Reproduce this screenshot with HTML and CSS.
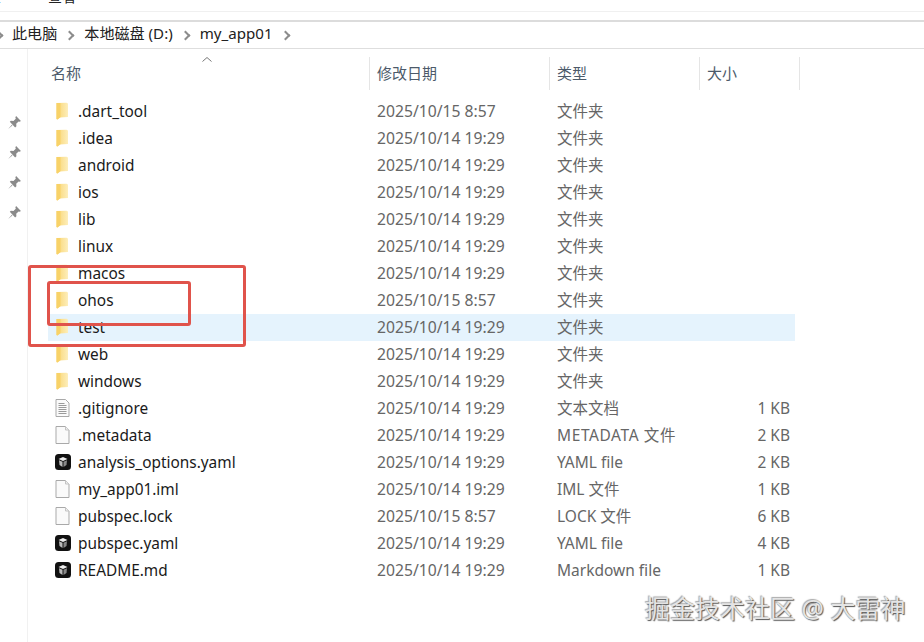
FILE: index.html
```html
<!DOCTYPE html>
<html lang="zh">
<head>
<meta charset="utf-8">
<title>my_app01</title>
<link rel="stylesheet" href="styles.css">
</head>
<body>
<svg class="defs" width="0" height="0" aria-hidden="true">
  <defs>
    <linearGradient id="fg" x1="0" y1="0" x2="1" y2="0">
      <stop offset="0" stop-color="#f9d677"/>
      <stop offset=".45" stop-color="#fbe091"/>
      <stop offset="1" stop-color="#fdeebb"/>
    </linearGradient>
  </defs>
  <symbol id="folder" viewBox="0 0 14 18">
    <path d="M1 1 L11 .8 L12.5 1.6 V15 L4 15.4 L2 17.4 L1 17 Z" fill="url(#fg)"/>
    <path d="M1 1 L5 .9 V15.2 L2 17.4 L1 17 Z" fill="#f8d268"/>
  </symbol>
  <symbol id="doc" viewBox="0 0 14 18">
    <path d="M.5 .5 H10 L13.5 4 V17.5 H.5 Z" fill="#fafafa" stroke="#a9a9a9"/>
    <path d="M10 .5 V4 H13.5" fill="#eee" stroke="#c4c4c4"/>
  </symbol>
  <symbol id="txt" viewBox="0 0 14 18">
    <path d="M.5 .5 H10 L13.5 4 V17.5 H.5 Z" fill="#fafafa" stroke="#a9a9a9"/>
    <path d="M3 4.5 H9 M3 6.5 H11 M3 8.5 H11 M3 10.5 H11 M3 12.5 H11 M3 14.5 H11" stroke="#9a9a9a" fill="none"/>
  </symbol>
  <symbol id="yaml" viewBox="0 0 16 16">
    <rect width="16" height="16" rx="3.5" fill="#111"/>
    <path d="M3.5 5 L8 3 L12.5 5 L8 7 Z" fill="#eee"/>
    <path d="M4 6.2 L7.5 7.8 V13 L4.5 11 Z" fill="#bbb"/>
    <path d="M12 6.2 L8.5 7.8 V13 L11.5 11 Z" fill="#888"/>
  </symbol>
  <symbol id="pin" viewBox="0 0 14 14">
    <path d="M8.5 1 L13 5.5 L11.8 6.3 L10.8 6 L8.6 8.2 L8.8 10.6 L7.6 11.6 L2.6 6.4 L3.6 5.4 L6 5.6 L8.2 3.4 L7.8 2.2 Z" fill="#8a8a8a"/>
    <path d="M4.6 9.2 L1 13 L5 9.8 Z" fill="#8a8a8a"/>
  </symbol>
</svg>

<div class="menubar"><span class="menu-a">查</span><span class="menu-b">查看</span></div>
<div class="ribbon"></div>
<nav class="crumbs">
  <span class="chev-left"></span>
  <span class="crumb">此电脑</span><span class="chev"></span>
  <span class="crumb">本地磁盘 (D:)</span><span class="chev"></span>
  <span class="crumb">my_app01</span><span class="chev"></span>
</nav>

<div class="explorer">
  <aside class="quick">
    <svg class="pin"><use href="#pin"/></svg>
    <svg class="pin"><use href="#pin"/></svg>
    <svg class="pin"><use href="#pin"/></svg>
    <svg class="pin"><use href="#pin"/></svg>
  </aside>
  <main class="listing">
    <div class="head">
      <div class="hc c-name">名称<svg class="sort" viewBox="0 0 10 5"><path d="M.5 4.5 L5 .5 L9.5 4.5" fill="none" stroke="#777"/></svg></div>
      <div class="hc c-date">修改日期</div>
      <div class="hc c-type">类型</div>
      <div class="hc c-size">大小</div>
    </div>
    <div class="rows">
      <div class="row"><div class="c-name"><svg class="ico"><use href="#folder"/></svg>.dart_tool</div><div class="c-date">2025/10/15 8:57</div><div class="c-type">文件夹</div><div class="c-size"></div></div>
      <div class="row"><div class="c-name"><svg class="ico"><use href="#folder"/></svg>.idea</div><div class="c-date">2025/10/14 19:29</div><div class="c-type">文件夹</div><div class="c-size"></div></div>
      <div class="row"><div class="c-name"><svg class="ico"><use href="#folder"/></svg>android</div><div class="c-date">2025/10/14 19:29</div><div class="c-type">文件夹</div><div class="c-size"></div></div>
      <div class="row"><div class="c-name"><svg class="ico"><use href="#folder"/></svg>ios</div><div class="c-date">2025/10/14 19:29</div><div class="c-type">文件夹</div><div class="c-size"></div></div>
      <div class="row"><div class="c-name"><svg class="ico"><use href="#folder"/></svg>lib</div><div class="c-date">2025/10/14 19:29</div><div class="c-type">文件夹</div><div class="c-size"></div></div>
      <div class="row"><div class="c-name"><svg class="ico"><use href="#folder"/></svg>linux</div><div class="c-date">2025/10/14 19:29</div><div class="c-type">文件夹</div><div class="c-size"></div></div>
      <div class="row"><div class="c-name"><svg class="ico"><use href="#folder"/></svg>macos</div><div class="c-date">2025/10/14 19:29</div><div class="c-type">文件夹</div><div class="c-size"></div></div>
      <div class="row"><div class="c-name"><svg class="ico"><use href="#folder"/></svg>ohos</div><div class="c-date">2025/10/15 8:57</div><div class="c-type">文件夹</div><div class="c-size"></div></div>
      <div class="row selected"><div class="c-name"><svg class="ico"><use href="#folder"/></svg>test</div><div class="c-date">2025/10/14 19:29</div><div class="c-type">文件夹</div><div class="c-size"></div></div>
      <div class="row"><div class="c-name"><svg class="ico"><use href="#folder"/></svg>web</div><div class="c-date">2025/10/14 19:29</div><div class="c-type">文件夹</div><div class="c-size"></div></div>
      <div class="row"><div class="c-name"><svg class="ico"><use href="#folder"/></svg>windows</div><div class="c-date">2025/10/14 19:29</div><div class="c-type">文件夹</div><div class="c-size"></div></div>
      <div class="row"><div class="c-name"><svg class="ico"><use href="#txt"/></svg>.gitignore</div><div class="c-date">2025/10/14 19:29</div><div class="c-type">文本文档</div><div class="c-size">1 KB</div></div>
      <div class="row"><div class="c-name"><svg class="ico"><use href="#doc"/></svg>.metadata</div><div class="c-date">2025/10/14 19:29</div><div class="c-type wide">METADATA 文件</div><div class="c-size">2 KB</div></div>
      <div class="row"><div class="c-name"><svg class="ico ico-yaml"><use href="#yaml"/></svg>analysis_options.yaml</div><div class="c-date">2025/10/14 19:29</div><div class="c-type">YAML file</div><div class="c-size">2 KB</div></div>
      <div class="row"><div class="c-name"><svg class="ico"><use href="#doc"/></svg>my_app01.iml</div><div class="c-date">2025/10/14 19:29</div><div class="c-type">IML 文件</div><div class="c-size">1 KB</div></div>
      <div class="row"><div class="c-name"><svg class="ico"><use href="#doc"/></svg>pubspec.lock</div><div class="c-date">2025/10/15 8:57</div><div class="c-type">LOCK 文件</div><div class="c-size">6 KB</div></div>
      <div class="row"><div class="c-name"><svg class="ico ico-yaml"><use href="#yaml"/></svg>pubspec.yaml</div><div class="c-date">2025/10/14 19:29</div><div class="c-type">YAML file</div><div class="c-size">4 KB</div></div>
      <div class="row"><div class="c-name"><svg class="ico ico-yaml"><use href="#yaml"/></svg>README.md</div><div class="c-date">2025/10/14 19:29</div><div class="c-type">Markdown file</div><div class="c-size">1 KB</div></div>
    </div>
  </main>
</div>

<div class="mark mark-outer"></div>
<div class="mark mark-inner"></div>
<div class="watermark">掘金技术社区 @ 大雷神</div>
</body>
</html>
```

FILE: styles.css
```css
html, body {
  margin: 0;
  height: 100%;
  background: #fff;
  overflow: hidden;
}
body {
  position: relative;
  font-family: "Noto Sans", "Noto Sans CJK SC", sans-serif;
  font-size: 15px;
  color: #1a1a1a;
}
.defs { position: absolute; }

.menubar {
  height: 12px;
  overflow: hidden;
  display: flex;
  border-bottom: 1px solid #f0f0f0;
  box-sizing: border-box;
  font-size: 14px;
  line-height: 20px;
  color: #222;
}
.menubar span { display: block; margin-top: -13px; }
.menu-a { margin-left: -13px; }
.menu-b { margin-left: 47px; }

.ribbon { height: 8px; }

.crumbs {
  height: 26px;
  border-top: 2px solid #dcdcdc;
  border-bottom: 1px solid #dedede;
  display: flex;
  align-items: center;
  color: #222;
  font-size: 15.1px;
  line-height: 20px;
}
.chev-left, .chev {
  width: 5px;
  height: 5px;
  border-top: 2px solid #8c8c8c;
  border-right: 2px solid #8c8c8c;
  transform: rotate(45deg);
  flex: none;
}
.chev-left { margin: 0 10px 0 -5px; }
.chev { margin: 0 11px 0 9px; }
.crumb { white-space: nowrap; margin-top: -4px; }

.explorer { display: flex; height: 593px; }
.quick {
  width: 28px;
  flex: none;
  border-right: 1px solid #f1f1f1;
  display: flex;
  flex-direction: column;
  align-items: flex-start;
  gap: 15px;
  padding: 66px 0 0 7px;
  box-sizing: border-box;
}
.pin { width: 15px; height: 15px; display: block; flex: none; }

.listing { flex: none; width: 780px; padding-left: 20px; box-sizing: border-box; }

.head {
  display: flex;
  height: 33px;
  margin-top: 8px;
  color: #4c5a6a;
  font-size: 15px;
}
.hc {
  position: relative;
  box-sizing: border-box;
  border-right: 1px solid #e5e5e5;
  padding-left: 7px;
  line-height: 32px;
}
.sort {
  position: absolute;
  left: 154px;
  top: 0;
  width: 10px;
  height: 5px;
}
.head .c-name { padding-left: 3px; }

.rows { margin-top: 8px; width: 747px; }
.row {
  display: flex;
  height: 27px;
  box-sizing: border-box;
  padding-bottom: 2px;
  align-items: center;
  color: #666;
  font-size: 15.5px;
  line-height: 20px;
}
.row.selected { background: #e5f3fd; }
.c-name { width: 322px; flex: none; box-sizing: border-box; }
.c-date { width: 180px; flex: none; box-sizing: border-box; }
.c-type { width: 150px; flex: none; box-sizing: border-box; }
.c-size { width: 100px; flex: none; box-sizing: border-box; }
.row .c-name {
  display: flex;
  align-items: center;
  color: #1a1a1a;
  font-size: 15.4px;
  padding-left: 7px;
  white-space: nowrap;
  margin-top: 2px;
}
.row .c-date { padding-left: 7px; white-space: nowrap; font-size: 15.7px; }
.row .c-type { padding-left: 7px; white-space: nowrap; }
.row .c-type.wide { letter-spacing: .6px; }
.row .c-size { width: 95px; text-align: right; padding-right: 5px; white-space: nowrap; }
.ico { width: 15px; height: 18px; flex: none; margin: -2px 8px 0 0; display: block; }
.ico-yaml { width: 16px; height: 16px; }
.row .c-name .ico-yaml { margin-right: 7px; }

.mark {
  position: absolute;
  box-sizing: border-box;
  border: 3px solid #e0534b;
  border-radius: 3px;
}
.mark-outer { left: 28px; top: 265px; width: 218px; height: 82px; }
.mark-inner { left: 47px; top: 281px; width: 144px; height: 45px; }

.watermark {
  position: absolute;
  left: 645px;
  top: 590px;
  font-size: 25px;
  line-height: 36px;
  white-space: nowrap;
  color: #e4e4e4;
  text-shadow: 1px 1px 1px #555, -1px -1px 1px #aaa;
}
```
